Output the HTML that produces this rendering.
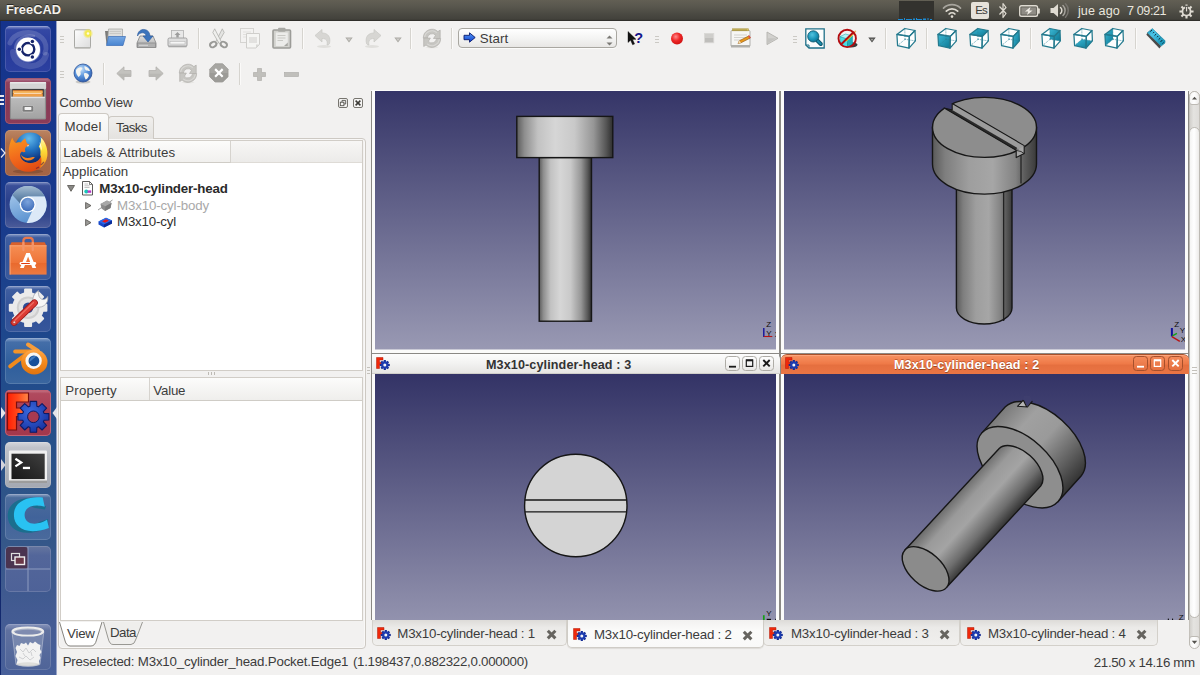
<!DOCTYPE html>
<html><head><meta charset="utf-8"><title>FreeCAD</title>
<style>
*{box-sizing:border-box;margin:0;padding:0}
html,body{width:1200px;height:675px;overflow:hidden;background:#f2f1f0;font-family:"Liberation Sans","DejaVu Sans",sans-serif;font-size:13px;color:#3c3c3c}
.abs{position:absolute}
svg{position:absolute;overflow:visible}
#panel{position:absolute;left:0;top:0;width:1200px;height:21px;background:linear-gradient(#625f54,#59574e 30%,#4b4a43 65%,#42413b 92%,#2f2e2a 97%);}
#panel .title{position:absolute;left:5px;top:2px;color:#f3efe6;font-weight:bold;font-size:13px;letter-spacing:0.1px}
#launcher{position:absolute;left:0;top:21px;width:57px;height:654px;background:linear-gradient(#15338c,#183a8c 30%,#1f4a8c 52%,#2a5288 68%,#355789 80%,#435b92 90%,#48609a);border-right:1px solid #97a3c6;border-left:1px solid #13296e}
.tile{position:absolute;left:4px;width:46px;height:46px;border-radius:5px;overflow:hidden;box-shadow:0 0 0 1px rgba(255,255,255,.14) inset}
.tile svg{left:0;top:0}
#win{position:absolute;left:57px;top:21px;width:1143px;height:654px;background:#f2f1f0}
.t{position:absolute;white-space:nowrap;line-height:1}
</style></head><body>
<div id="panel">
<div class="abs" style="left:898.500px;top:1px;width:35px;height:19px;background:#33322e"></div>
<svg style="left:898px;top:17px" width="36" height="4" viewBox="0 0 36 4"><g fill="#1c8cd6"><rect x="0" y="2" width="5" height="1"/><rect x="6" y="1" width="1" height="2"/><rect x="8" y="2" width="6" height="1"/><rect x="15" y="1.500" width="2" height="1.500"/><rect x="18" y="1" width="1" height="2"/><rect x="19" y="2" width="5" height="1"/><rect x="25" y="1.500" width="3" height="1.500"/><rect x="29.500" y="1" width="1" height="2"/><rect x="32" y="2" width="2" height="1"/></g></svg>
<!-- wifi -->
<svg style="left:942px;top:2px" width="20" height="17" viewBox="0 0 20 17">
<g fill="none" stroke="#dfdbd2" stroke-width="1.7" stroke-linecap="round">
<path d="M1.5 6.2 A12 12 0 0 1 18.5 6.2" stroke="#a8a59d"/>
<path d="M4.3 9.2 A8 8 0 0 1 15.7 9.2"/>
<path d="M7.1 12 A4.2 4.2 0 0 1 12.9 12"/></g>
<circle cx="10" cy="14.6" r="1.3" fill="#dfdbd2"/>
</svg>
<!-- Es -->
<div class="abs" style="left:971px;top:2px;width:18px;height:17px;background:#e6e2da;border-radius:2px"></div>
<!-- bluetooth -->
<svg style="left:998.300px;top:2px" width="10" height="17" viewBox="0 0 10 17">
<path d="M1.5 4.5 L8 11.5 L5 15.5 L5 1.5 L8 5.5 L1.5 12.5" fill="none" stroke="#dfdbd2" stroke-width="1.2" stroke-linejoin="round"/>
</svg>
<!-- battery -->
<svg style="left:1019px;top:4.500px" width="22" height="12" viewBox="0 0 24 13">
<rect x="0.8" y="0.8" width="19.4" height="11.4" rx="2" fill="none" stroke="#dfdbd2" stroke-width="1.5"/>
<rect x="2.5" y="2.5" width="16" height="8" fill="#8f8c85"/>
<rect x="20.5" y="3.5" width="2.2" height="6" rx="1" fill="#dfdbd2"/>
<path d="M12.5 2.2 L6.5 7 L10 7 L8.8 10.8 L14.8 6 L11.3 6 Z" fill="#f0ede6"/>
</svg>
<!-- volume -->
<svg style="left:1050px;top:3px" width="20" height="15" viewBox="0 0 20 15">
<path d="M0.5 5 H3.5 L8 1 V14 L3.5 10 H0.5 Z" fill="#dfdbd2"/>
<g fill="none" stroke-linecap="round" stroke-width="1.5">
<path d="M10.5 4.5 A4 4 0 0 1 10.5 10.5" stroke="#dfdbd2"/>
<path d="M13 2.5 A7 7 0 0 1 13 12.5" stroke="#a5a29b"/>
<path d="M15.5 0.8 A9.5 9.5 0 0 1 15.5 14.2" stroke="#77746e"/>
</g></svg>
<!-- gear/power -->
<svg style="left:1178.500px;top:3.500px" width="15" height="15" viewBox="0 0 17 17">
<g stroke="#dfdbd2" stroke-width="2.4" stroke-linecap="butt">
<path d="M8.5 0.5V3.5 M8.5 13.5V16.5 M0.5 8.5H3.5 M13.5 8.5H16.5 M2.8 2.8L5 5 M12 12L14.2 14.2 M2.8 14.2L5 12 M12 5L14.2 2.8"/></g>
<circle cx="8.5" cy="8.5" r="4.6" fill="none" stroke="#dfdbd2" stroke-width="2"/>
<rect x="7" y="2" width="3" height="7" fill="#3f3e3a"/>
<rect x="7.8" y="3.2" width="1.5" height="5.3" fill="#dfdbd2"/>
</svg>
</div>
<span class="t" style="left:6px;top:4px;font-size:12.8px;letter-spacing:0.033px;color:#f4f2ec;font-weight:bold;text-shadow:0 -1px 0 #2a2925;">FreeCAD</span>
<span class="t" style="left:975.3px;top:5px;font-size:11.5px;letter-spacing:-1.011px;color:#3c3b37;">Es</span>
<span class="t" style="left:1078px;top:5px;font-size:12.6px;letter-spacing:0.067px;color:#e9e6de;">jue ago</span>
<span class="t" style="left:1127px;top:5px;font-size:12.6px;letter-spacing:-0.404px;color:#e9e6de;">7 09:21</span>
<div id="launcher">
<!-- 1 dash -->
<div class="tile" style="top:5px;background:linear-gradient(#8c9ad0,#3448a4 8%,#273a9b 55%,#2c40a0)"><svg width="46" height="46" viewBox="0 0 46 46">
<g fill="none" stroke="#fff" stroke-linecap="round"><path d="M5 17 C9 7 26 2 37 12 C41 16 42 22 40 27" stroke-width="5" opacity=".16"/><path d="M8 26 C8 36 20 43 32 39 C37 37 40 33 41 29" stroke-width="6" opacity=".14"/><path d="M10 22 C11 13 20 8 29 10" stroke-width="2.500" opacity=".2"/></g>
<circle cx="23.100" cy="23.900" r="12.600" fill="#aab4dc" opacity=".5"/>
<circle cx="23.100" cy="23.500" r="11.900" fill="#fff"/>
<circle cx="23.1" cy="23.2" r="6.200" fill="none" stroke="#16246a" stroke-width="2.400"/>
<circle cx="14.30" cy="23.20" r="2.700" fill="#fff"/><circle cx="27.37" cy="15.50" r="2.700" fill="#fff"/><circle cx="27.37" cy="30.90" r="2.700" fill="#fff"/><circle cx="14.30" cy="23.20" r="1.750" fill="#16246a"/><circle cx="27.37" cy="15.50" r="1.750" fill="#16246a"/><circle cx="27.37" cy="30.90" r="1.750" fill="#16246a"/>
</svg></div>
<!-- 2 files -->
<div class="tile" style="top:57px;background:linear-gradient(#bc8098,#90405c 10%,#883a56 60%,#8c3c58);box-shadow:0 0 0 1px #a05a72 inset"><svg width="46" height="46" viewBox="0 0 46 46">
<defs><linearGradient id="cab" x1="0" y1="0" x2="0" y2="1"><stop offset="0" stop-color="#bcbcbc"/><stop offset="1" stop-color="#a2a2a2"/></linearGradient></defs>
<rect x="4.900" y="4" width="36.200" height="37.400" rx="1.500" fill="#8e8e8e"/>
<rect x="4.900" y="4" width="36.200" height="7.200" rx="1.500" fill="#d4d4d4"/>
<rect x="4.900" y="4" width="36.200" height="1.500" rx=".7" fill="#e8e8e8"/>
<rect x="7.200" y="10.900" width="31.600" height="8" fill="#3c3c3c"/>
<rect x="7.900" y="12.200" width="29.700" height="6.600" fill="#e8822e"/>
<rect x="7.900" y="13.200" width="29.700" height="2" fill="#f5b860"/>
<rect x="9" y="15.300" width="27.500" height=".9" fill="#fff6e4"/>
<rect x="7.900" y="16.300" width="29.700" height="2.500" fill="#f0a048"/>
<rect x="6" y="18.800" width="33.900" height="21.800" rx=".8" fill="url(#cab)"/>
<rect x="6" y="18.800" width="33.900" height="1.300" fill="#e2e2e6"/>
<rect x="17.200" y="27.500" width="11.500" height="6.500" rx="1.500" fill="#7c7c7c" stroke="#c4c4c4" stroke-width=".7"/>
<rect x="19.500" y="29" width="6.900" height="3.100" rx=".8" fill="#f2f2f2"/>
</svg></div>
<svg style="left:-1px;top:73px" width="5" height="12"><rect x="0" y="1" width="4" height="2" fill="#e8e8f0"/><rect x="0" y="5" width="4" height="2" fill="#e8e8f0"/><rect x="0" y="9" width="4" height="2" fill="#e8e8f0"/></svg>
<!-- 3 firefox -->
<div class="tile" style="top:109px;background:linear-gradient(#bc8562,#a96a48 30%,#a46444)"><svg width="46" height="46" viewBox="0 0 46 46">
<defs><radialGradient id="ffb" cx=".45" cy=".2" r=".85"><stop offset="0" stop-color="#62baec"/><stop offset=".45" stop-color="#2272c0"/><stop offset=".8" stop-color="#123a84"/><stop offset="1" stop-color="#0c2660"/></radialGradient>
<linearGradient id="ffo" x1=".2" y1="0" x2=".6" y2="1"><stop offset="0" stop-color="#f7941e"/><stop offset=".5" stop-color="#f26a1c"/><stop offset="1" stop-color="#e04a12"/></linearGradient>
<linearGradient id="ffy" x1="0" y1="0" x2="0" y2="1"><stop offset="0" stop-color="#fff6c0"/><stop offset=".4" stop-color="#fde23a"/><stop offset="1" stop-color="#f7941e"/></linearGradient></defs>
<ellipse cx="23" cy="41.500" rx="15" ry="2" fill="#5c3420" opacity=".35"/>
<circle cx="25.400" cy="17.800" r="15.200" fill="url(#ffb)"/>
<path d="M7.300 7.500 C5 12 3.500 17 3.800 23 C4.500 34 13 41.800 23.500 41.800 C33 41.800 41 35 42.300 26 C43 20 41.500 13 37 8 C38.500 13 38 17 36.500 19 C37.500 25 35 30 31 32 C27 34 21 33.500 17.500 30 C14.500 27 14.500 23 17 21.500 C18 22.500 19.500 22.500 20.500 21.500 C19.500 19.500 20 17.500 21.500 16.500 C22.800 16.200 24 15.500 24.500 14.500 C23 14 22 13.500 21.500 12.500 C21 10.500 20.500 9.500 20.200 8.300 C18.500 9.500 17 11 16 12.500 C14 12 12 12.200 10.500 13 C9 11.500 7.800 9.500 7.300 7.500 Z" fill="url(#ffo)"/>
<path d="M16 24.500 C18 27.500 22 28.800 26.800 27.200 C28 26.800 29 26.800 29.800 27.300 C28.500 29.500 25.500 31 22 30.500 C19 30 16.500 27.500 16 24.500 Z" fill="#f58220"/>
<path d="M35.500 7 C41 12 43 20 42.300 26 C41.800 31 39 35 35 38 C37 33 36.800 28 35.300 25 C35.800 21 35.300 18.500 33.800 16.500 C35.800 13.500 36.500 10 35.500 7 Z" fill="url(#ffy)"/>
<path d="M34.500 12 C36.500 15 37 18 36.500 21 C35.500 18 35 15 34.500 12 Z" fill="#fff" opacity=".85"/>
<path d="M21.800 15.800 L24.200 14.800 L23 16.800 Z" fill="#fbe4c8"/>
<path d="M36 35 l3 -3 M31 38.500 l3 -1.500" stroke="#4a1a4a" stroke-width="1.200" opacity=".6"/>
</svg></div>
<svg style="left:0;top:126px" width="5" height="12"><path d="M0 1.5 L4 6 L0 10.5" fill="none" stroke="#e8e8f0" stroke-width="1.2"/></svg>
<!-- 4 chromium -->
<div class="tile" style="top:161px;background:linear-gradient(#7c8cc0,#3a4f98 8%,#2a408c 40%,#33488e 75%,#4c5c9a)"><svg width="46" height="46" viewBox="0 0 46 46">
<defs><linearGradient id="chl" x1="0" y1="0" x2=".4" y2="1"><stop offset="0" stop-color="#b4d2f0"/><stop offset="1" stop-color="#5a92d0"/></linearGradient>
<linearGradient id="cht" x1="0" y1="0" x2="0" y2="1"><stop offset="0" stop-color="#a4bcd2"/><stop offset=".5" stop-color="#6c8eb0"/><stop offset="1" stop-color="#3e648c"/></linearGradient>
<radialGradient id="chc" cx=".5" cy=".3" r=".8"><stop offset="0" stop-color="#7ca4dc"/><stop offset="1" stop-color="#3464b4"/></radialGradient></defs>
<circle cx="23.100" cy="22.500" r="18.500" fill="url(#chl)"/>
<path d="M7.300 12.900 A18.500 18.500 0 0 1 39.700 14.400 L22.700 14.400 L17 23.500 Z" fill="url(#cht)"/>
<path d="M39.700 14.400 A18.500 18.500 0 0 1 21.600 40.900 L27 29.500 L22.700 14.400 Z" fill="#dce9f7"/>
<circle cx="22.700" cy="22.500" r="8" fill="#fff"/><circle cx="22.700" cy="22.500" r="6.700" fill="url(#chc)"/>
</svg></div>
<!-- 5 software center -->
<div class="tile" style="top:213px;background:linear-gradient(#8a9cc8,#3f5ea0 8%,#33549a 50%,#3a5a9c)"><svg width="46" height="46" viewBox="0 0 46 46">
<defs><linearGradient id="bag" x1="0" y1="0" x2="0" y2="1"><stop offset="0" stop-color="#f68e54"/><stop offset=".6" stop-color="#ee7438"/><stop offset=".62" stop-color="#e96a2e"/><stop offset="1" stop-color="#ec7a42"/></linearGradient></defs>
<path d="M6.500 8.200 H39.700 L41.600 12 H4.600 Z" fill="#d8602c"/>
<path d="M18.400 14 V6.500 A3 3 0 0 1 21.400 3.800 H24.800 A3 3 0 0 1 27.800 6.500 V14" fill="none" stroke="#e8764a" stroke-width="2.300"/>
<rect x="4.600" y="11.300" width="37" height="29.300" fill="url(#bag)"/>
<rect x="4.600" y="11.300" width="1" height="29.300" fill="#fbb088" opacity=".8"/>
<rect x="4.600" y="11.300" width="37" height="1" fill="#fbb088" opacity=".7"/>
<path d="M18.400 16 V9 M27.800 16 V9" stroke="#f49468" stroke-width="2.300" stroke-linecap="round"/>
<path d="M15 34 L21.300 19 H24.900 L31.200 34 H27.400 L23.100 22.500 L18.800 34 Z" fill="#fff"/>
<rect x="14.600" y="28.100" width="16.600" height="2.800" rx="1.400" fill="#fff"/>
<rect x="16" y="29.100" width="9" height=".9" rx=".4" fill="#e03c10"/>
</svg></div>
<!-- 6 settings -->
<div class="tile" style="top:265px;background:linear-gradient(#8a9cc8,#3f5ea0 8%,#2f5098 50%,#36569a)"><svg width="46" height="46" viewBox="0 0 46 46">
<g transform="translate(23.100 21.700)"><g fill="#ebebeb">
<rect x="-4" y="-19.300" width="8" height="38.600" rx="1"/><rect x="-4" y="-19.300" width="8" height="38.600" rx="1" transform="rotate(45)"/><rect x="-4" y="-19.300" width="8" height="38.600" rx="1" transform="rotate(90)"/><rect x="-4" y="-19.300" width="8" height="38.600" rx="1" transform="rotate(135)"/>
<circle r="15.800"/></g>
<circle r="11.300" fill="#cfcfcf"/><circle r="9.300" fill="#e2e2e2"/><circle r="5.200" fill="#2c4c96"/></g>
<path d="M28 17 C27 13 28.500 7.500 33.500 4.500 C33 7 33.500 10.500 35.500 12.500 C38 14.500 41 13.500 42.700 10.500 C43.500 15 41 19.500 36.500 20.800 C34 21.500 32.500 21 31.500 21.500 Z" fill="#f6f6f6" stroke="#a4a8b0" stroke-width=".8"/>
<path d="M9 36.500 L29.500 16.800" stroke="#9c1c1c" stroke-width="6.800" stroke-linecap="round"/>
<path d="M9 36.500 L29.500 16.800" stroke="#dc3c34" stroke-width="5.200" stroke-linecap="round"/>
<path d="M9.500 34.800 L28.500 16.500" stroke="#ee6c60" stroke-width="1.300" stroke-linecap="round"/>
<circle cx="9.300" cy="36.300" r="1.300" fill="#f4d4d0" stroke="#9c1c1c" stroke-width=".5"/>
</svg></div>
<!-- 7 blender -->
<div class="tile" style="top:317px;background:linear-gradient(#8aa4cc,#446ea8 9%,#2f5e9c 55%,#3a669f)"><svg width="46" height="46" viewBox="0 0 46 46">
<defs><linearGradient id="blo" x1="0" y1="0" x2="0" y2="1"><stop offset="0" stop-color="#ffa848"/><stop offset=".5" stop-color="#f48a1c"/><stop offset="1" stop-color="#e2740e"/></linearGradient></defs>
<g stroke="url(#blo)" stroke-width="4" stroke-linecap="round" fill="none"><path d="M5.200 28.300 L22 15.500" stroke="#f08a1c"/><path d="M10.200 13.500 H28" stroke="#f59428"/><path d="M23 6.500 L33 13" stroke="#f79c38"/></g>
<ellipse cx="29.300" cy="24" rx="13.200" ry="12.500" fill="url(#blo)"/>
<circle cx="28.600" cy="22.800" r="8.200" fill="#f6f6f4"/>
<circle cx="28.900" cy="22.900" r="5.400" fill="#16509a"/>
<path d="M24.500 24 A5.400 5.400 0 0 1 31.500 18.300 Z" fill="#4c86c8" opacity=".8"/>
</svg></div>
<!-- 8 freecad -->
<div class="tile" style="top:369px;background:linear-gradient(#c87888,#b04a5e 8%,#a83a50 60%,#a4384c);box-shadow:0 0 0 1px #c06274 inset"><svg width="46" height="46" viewBox="0 0 46 46">
<defs><linearGradient id="fcr" x1="0" y1="0" x2="1" y2="0"><stop offset="0" stop-color="#ff1e04"/><stop offset=".5" stop-color="#ff4a1c"/><stop offset="1" stop-color="#ff8848"/></linearGradient>
<radialGradient id="fcg" cx=".4" cy=".35" r=".7"><stop offset="0" stop-color="#3a6ae0"/><stop offset="1" stop-color="#1632a0"/></radialGradient></defs>
<path d="M2.500 3 H23.500 V12 H11.500 V18 H19.500 V26.500 H11.500 V40 H2.500 Z" fill="url(#fcr)" stroke="#7a0c0c" stroke-width="1.200"/>
<path d="M24.94 16.15 L25.20 11.33 L31.60 11.33 L31.86 16.15 L33.48 16.82 L37.07 13.59 L41.61 18.13 L38.38 21.72 L39.05 23.34 L43.87 23.60 L43.87 30.00 L39.05 30.26 L38.38 31.88 L41.61 35.47 L37.07 40.01 L33.48 36.78 L31.86 37.45 L31.60 42.27 L25.20 42.27 L24.94 37.45 L23.32 36.78 L19.73 40.01 L15.19 35.47 L18.42 31.88 L17.75 30.26 L12.93 30.00 L12.93 23.60 L17.75 23.34 L18.42 21.72 L15.19 18.13 L19.73 13.59 L23.32 16.82 Z" fill="url(#fcg)" stroke="#0c1a64" stroke-width="1.100" stroke-linejoin="round"/>
<circle cx="28.400" cy="26.800" r="5.800" fill="#a83a50" stroke="#0c1a64" stroke-width="1"/>
</svg></div>
<svg style="left:0;top:385px" width="5" height="14"><path d="M0 1 L4.500 7 L0 13 Z" fill="#e4e4ea"/></svg>
<svg style="left:51px;top:385px" width="5" height="14"><path d="M5 1 L.5 7 L5 13 Z" fill="#e4e4ea"/></svg>
<!-- 9 terminal -->
<div class="tile" style="top:421px;background:linear-gradient(#d4d6dc,#c0c3ca 12%,#acb0b8 70%,#a4a8b2)"><svg width="46" height="46" viewBox="0 0 46 46">
<defs><linearGradient id="scr" x1="1" y1="0" x2="0" y2="1"><stop offset="0" stop-color="#404040"/><stop offset=".5" stop-color="#2a2a2a"/><stop offset="1" stop-color="#181818"/></linearGradient></defs>
<rect x="3.900" y="8.600" width="38.100" height="32.400" rx="1.200" fill="#f0f0f0"/>
<rect x="3.900" y="38.500" width="38.100" height="2.500" fill="#9c9c9c"/>
<rect x="6.500" y="11.700" width="33.200" height="25.400" fill="url(#scr)"/>
<path d="M10.400 16.700 L16.200 20.600 L10.400 24.400" fill="none" stroke="#fff" stroke-width="2.300"/>
<rect x="17.900" y="24.800" width="7.100" height="2.300" fill="#fff"/>
</svg></div>
<svg style="left:0;top:437px" width="5" height="14"><path d="M0 1 L4.500 7 L0 13 Z" fill="#d4d4dc"/></svg>
<!-- 10 cura C -->
<div class="tile" style="top:473px;background:linear-gradient(#8fa2c4,#4c6c9c 8%,#41639a 50%,#4a6a9c)"><svg width="46" height="46" viewBox="0 0 46 46">
<path d="M31.500 4 C19 2.500 2.700 7 2.700 21.500 C2.700 35 16 43.500 37.500 36 L35.500 27.500 C25.500 33.500 13.500 31.500 13.500 21.500 C13.500 12.500 23.500 10.500 33.500 13.500 Z" fill="#1b6e8e"/>
<path d="M26 12.500 L41 12 L40 15.500 L30 14 Z M34 28 L43 25 L43.500 31 L36 31 Z" fill="#1b6e8e"/>
<path d="M37.700 3.500 C25 2 8.900 6 8.900 21 C8.900 34 22 42 43.900 33.900 L42 25.800 C32 32 19.600 31 19.600 21 C19.600 12 30 10 39.700 12.700 Z" fill="#29c2f2"/>
</svg></div>
<!-- 11 workspaces -->
<div class="tile" style="top:525px;background:linear-gradient(#66769f,#53669a 20%,#4e6298)"><svg width="46" height="46" viewBox="0 0 46 46">
<rect x="1" y="1" width="22" height="22" rx="3" fill="#4a3450"/>
<rect x="22.500" y="1" width="1" height="44" fill="#8e9bc0"/><rect x="1" y="22.500" width="44" height="1" fill="#8e9bc0"/>
<rect x="6.500" y="7.500" width="8" height="7" fill="#4a3450" stroke="#ddd" stroke-width="1.200"/>
<rect x="10" y="11" width="9.500" height="7.500" fill="#6a3848" stroke="#eee" stroke-width="1.400"/>
</svg></div>
<!-- trash -->
<div class="tile" style="top:603px;background:linear-gradient(#8794bc,#60719f 14%,#566a9c 60%,#4f6498)"><svg width="46" height="46" viewBox="0 0 46 46">
<path d="M7 8 L11 40.500 Q23 44.500 35 40.500 L38.800 8 Z" fill="#aab4cc" opacity=".35"/>
<path d="M7 8 L11 40.500 Q23 44.500 35 40.500 L38.800 8" fill="none" stroke="#c8cede" stroke-width=".8" opacity=".7"/>
<path d="M10.500 24 L12 21 L14.500 22 L16 19 L19 20 L21 18.500 L23 21.500 L25 18 L28 19.500 L30 17.500 L33 20 L35.500 21 L35 25 L36.500 28 L34.500 31 L35.500 34 L34 37 L34.500 40 Q23 43.500 11.500 40 L12.500 36 L10.500 32 L12 28 Z" fill="#f2f2f2"/>
<path d="M15 25 l3 3 l3 -4 l3 5 l4 -4 l3 3 M14 33 l4 2 l3 -3 l4 4 l4 -3 M18 29 l2 3 M26 28 l1 4" stroke="#cfd0d2" stroke-width="1" fill="none"/>
<ellipse cx="22.800" cy="40.300" rx="11.800" ry="2" fill="#d8d8d4" opacity=".8"/>
<ellipse cx="22.800" cy="7.500" rx="15.300" ry="4" fill="#a8b0c4" stroke="#ececec" stroke-width="2.200"/>
<ellipse cx="22.800" cy="8.200" rx="13" ry="2.400" fill="#7f8bb0"/>
</svg></div>
</div>
<div id="tb">
<svg style="left:60px;top:36px" width="5" height="8" viewBox="0 0 5 8"><g fill="#cbc9c4"><rect x="0" y="0" width="4" height="1"/><rect x="0" y="3" width="4" height="1"/><rect x="0" y="6" width="4" height="1"/></g></svg>
<svg style="left:60px;top:71px" width="5" height="8" viewBox="0 0 5 8"><g fill="#cbc9c4"><rect x="0" y="0" width="4" height="1"/><rect x="0" y="3" width="4" height="1"/><rect x="0" y="6" width="4" height="1"/></g></svg>
<svg style="left:74px;top:29px" width="18" height="20" viewBox="0 0 18 20"><defs><linearGradient id="pg" x1="0" y1="0" x2="1" y2="1"><stop offset="0" stop-color="#fdfdfd"/><stop offset="1" stop-color="#dcdcdc"/></linearGradient>
<radialGradient id="sun"><stop offset="0" stop-color="#fffbd0"/><stop offset=".45" stop-color="#f6ec50"/><stop offset="1" stop-color="#f0e040" stop-opacity="0"/></radialGradient></defs>
<rect x="0.5" y="0.800" width="16" height="18" rx="1" fill="url(#pg)" stroke="#a9a9a5"/>
<rect x="0.5" y="18" width="16" height="1.500" fill="#b4b4b0"/>
<circle cx="14" cy="4.500" r="5.200" fill="url(#sun)"/><circle cx="14" cy="4.500" r="3" fill="#f3ea50"/><circle cx="14" cy="4.500" r="1.300" fill="#fffde0"/></svg>
<svg style="left:104px;top:28px" width="22" height="19" viewBox="0 0 22 19"><defs><linearGradient id="fo" x1="0" y1="0" x2="0" y2="1"><stop offset="0" stop-color="#76a8e4"/><stop offset="1" stop-color="#4884d0"/></linearGradient></defs>
<path d="M1 3 L2.500 16.500 H17 V3 Z" fill="#7c7c7a"/>
<path d="M4.500 1 H18.500 V14 H3.500 Z" fill="#dededc" stroke="#a0a09c" stroke-width=".7"/>
<path d="M5.500 3.500 H17 M5.500 5.500 H17" stroke="#c4c4c0" stroke-width=".8"/>
<path d="M4.500 8.500 H21.500 L19 17.500 H2.500 Z" fill="url(#fo)" stroke="#3a6cb4" stroke-width=".7"/></svg>
<svg style="left:136px;top:28px" width="21" height="21" viewBox="0 0 21 21"><defs><linearGradient id="hd" x1="0" y1="0" x2="0" y2="1"><stop offset="0" stop-color="#e0e0e0"/><stop offset="1" stop-color="#a8a8a8"/></linearGradient></defs>
<path d="M4 8 H17 L20 15 V19.500 H1 V15 Z" fill="url(#hd)" stroke="#8c8c8c" stroke-width=".9"/>
<rect x="1.500" y="15" width="18" height="4.500" fill="#b0b0b0" stroke="#8c8c8c" stroke-width=".8"/>
<path d="M3 17.300 H12" stroke="#d8d8d8" stroke-width="1"/>
<path d="M1.500 8 C1.500 3.500 5 1 8.500 1.500 C12 2 13.800 4.500 14 8 L17 8 L12 14 L7 8 L10 8 C9.800 6 8.500 4.800 6.500 4.800 C4.500 4.800 2.500 6 1.500 8 Z" fill="#3c74bc" stroke="#2c5a9c" stroke-width=".6"/></svg>
<svg style="left:167px;top:30px" width="21" height="18" viewBox="0 0 21 18"><rect x="4.500" y="0.500" width="12" height="8" fill="#e8e8e8" stroke="#b0b0b0" stroke-width=".8"/>
<path d="M10.500 2 L13.500 5 H11.700 V7.500 H9.300 V5 H7.500 Z" fill="#9c9c9c"/>
<rect x="1" y="8" width="19" height="8.500" rx="1.500" fill="#dedede" stroke="#9a9a9a" stroke-width=".9"/>
<rect x="3" y="11.500" width="15" height="2.500" fill="#f6f6f6" stroke="#b0b0b0" stroke-width=".5"/>
<rect x="1.500" y="15.500" width="18" height="1.800" fill="#a8a8a8"/></svg>
<div class="abs" style="left:198px;top:28px;width:1px;height:21px;background:#d6d4cf"></div><div class="abs" style="left:199px;top:28px;width:1px;height:21px;background:#fbfaf9"></div>
<svg style="left:209px;top:28px" width="19" height="21" viewBox="0 0 19 21"><path d="M6.300 14.500 L13.300 0.800 L15.200 4.500 L8.800 15.500 Z" fill="#e4e4e2" stroke="#a8a8a4" stroke-width=".7"/>
<path d="M12.700 14.500 L5.700 0.800 L3.800 4.500 L10.200 15.500 Z" fill="#efefed" stroke="#a8a8a4" stroke-width=".7"/>
<g fill="none" stroke="#9a9a97" stroke-width="1.900"><ellipse cx="4.200" cy="16.500" rx="3.300" ry="2.500" transform="rotate(-30 4.200 16.500)"/><ellipse cx="14.800" cy="16.500" rx="3.300" ry="2.500" transform="rotate(30 14.800 16.500)"/></g></svg>
<svg style="left:240px;top:28px" width="21" height="21" viewBox="0 0 21 21"><g opacity=".6"><rect x="0.500" y="0.500" width="13" height="14" fill="#f4f4f2" stroke="#c2c2be"/>
<path d="M3 4 H11 M3 6.500 H11 M3 9 H11" stroke="#d6d6d2"/>
<path d="M6.500 5.500 H19.500 V16.500 L16 20 H6.500 Z" fill="#f8f8f6" stroke="#b8b8b4"/>
<rect x="9" y="9" width="8" height="6" fill="#d8d8d4"/>
<path d="M16 20 V16.500 H19.500 Z" fill="#c8c8c4"/></g></svg>
<svg style="left:272px;top:27px" width="20" height="22" viewBox="0 0 20 22"><rect x="1" y="3" width="17.500" height="18" rx="1" fill="#d2d2ce" stroke="#9c9c98" stroke-width="1.600"/>
<rect x="3.800" y="5.500" width="12" height="13.500" fill="#ececea"/>
<path d="M5.500 8.500 H13.500 M5.500 11 H13.500 M5.500 13.500 H11" stroke="#c8c8c4"/>
<rect x="6" y="0.800" width="7.500" height="4" rx="1" fill="#a8a8a4"/>
<path d="M12 19 L15.800 19 L15.800 15.500 Z" fill="#a8a8a4"/></svg>
<div class="abs" style="left:302px;top:28px;width:1px;height:21px;background:#d6d4cf"></div><div class="abs" style="left:303px;top:28px;width:1px;height:21px;background:#fbfaf9"></div>
<svg style="left:314px;top:29px" width="19" height="19" viewBox="0 0 19 19"><ellipse cx="10" cy="17.500" rx="7" ry="1.500" fill="#e0dfdc"/>
<path d="M1 6.500 L8 0.500 V4 C14 4 17 8 15.500 14.500 C15 15.500 14 16 13 16 C14 11.500 12 9.500 8 9.500 V13 Z" fill="#d7d6d3" stroke="#c9c8c4" stroke-width=".7"/></svg>
<svg style="left:345px;top:37px" width="8" height="6" viewBox="0 0 8 6"><path d="M0.3 0.5 H7.7 L4 5.5 Z" fill="#a9a7a2"/><path d="M2 1.500 H6 L4 4 Z" fill="#cfcdc9"/></svg>
<svg style="left:363px;top:29px" width="19" height="19" viewBox="0 0 19 19"><ellipse cx="9" cy="17.500" rx="7" ry="1.500" fill="#e0dfdc"/>
<path d="M18 6.500 L11 0.500 V4 C5 4 2 8 3.500 14.500 C4 15.500 5 16 6 16 C5 11.500 7 9.500 11 9.500 V13 Z" fill="#d7d6d3" stroke="#c9c8c4" stroke-width=".7"/></svg>
<svg style="left:394px;top:37px" width="8" height="6" viewBox="0 0 8 6"><path d="M0.3 0.5 H7.7 L4 5.5 Z" fill="#a9a7a2"/><path d="M2 1.500 H6 L4 4 Z" fill="#cfcdc9"/></svg>
<div class="abs" style="left:410px;top:28px;width:1px;height:21px;background:#d6d4cf"></div><div class="abs" style="left:411px;top:28px;width:1px;height:21px;background:#fbfaf9"></div>
<svg style="left:422.5px;top:28.5px" width="18" height="19" viewBox="0 0 18 19"><ellipse cx="9" cy="18.300" rx="6.500" ry=".9" fill="#e6e5e2"/><path d="M0.300 9.100 A8.700 8.700 0 0 1 14.900 2.600 L17.200 1.100 L17.200 9.500 L10.500 9.500 L12.600 6.200 A4.800 4.800 0 0 0 4.300 9.100 Z" fill="#c7c6c2" stroke="#b1b0ac" stroke-width=".7" stroke-linejoin="round"/><path d="M1.600 8.300 A7.400 7.400 0 0 1 13.800 3.700" fill="none" stroke="#d9d8d5" stroke-width="1.100"/><g transform="rotate(180 8.950 9.300)"><path d="M0.300 9.100 A8.700 8.700 0 0 1 14.900 2.600 L17.200 1.100 L17.200 9.500 L10.500 9.500 L12.600 6.200 A4.800 4.800 0 0 0 4.300 9.100 Z" fill="#c7c6c2" stroke="#b1b0ac" stroke-width=".7" stroke-linejoin="round"/><path d="M1.600 8.300 A7.400 7.400 0 0 1 13.800 3.700" fill="none" stroke="#d9d8d5" stroke-width="1.100"/></g></svg>
<div class="abs" style="left:451px;top:28px;width:1px;height:21px;background:#d6d4cf"></div><div class="abs" style="left:452px;top:28px;width:1px;height:21px;background:#fbfaf9"></div>
<div class="abs" style="left:458px;top:28px;width:159px;height:20px;border:1px solid #a9a7a1;border-radius:4px;background:linear-gradient(#ffffff,#f4f4f3 50%,#e8e7e5);box-shadow:0 1px 0 #fbfbfa"></div>
<svg style="left:463px;top:32px" width="13" height="11" viewBox="0 0 13 11"><defs><linearGradient id="ar" x1="0" y1="0" x2="0" y2="1"><stop offset="0" stop-color="#5a9af4"/><stop offset="1" stop-color="#0a3fd0"/></linearGradient></defs>
<path d="M1 3.300 H6.500 V0.800 L12.200 5.500 L6.500 10.200 V7.700 H1 Z" fill="url(#ar)" stroke="#0a1a6c" stroke-width=".9" stroke-linejoin="round"/></svg>
<span class="t" style="left:479.7px;top:32px;font-size:13.3px;letter-spacing:0.101px;color:#3c3c3c;">Start</span>
<svg style="left:606px;top:35px" width="7" height="11" viewBox="0 0 7 11"><path d="M0.500 3.500 L3.500 0.500 L6.500 3.500 Z" fill="#7a7974"/><path d="M0.500 7.500 L3.500 10.500 L6.500 7.500 Z" fill="#7a7974"/></svg>
<svg style="left:627px;top:31px" width="16" height="15" viewBox="0 0 16 15"><path d="M1 0.500 L1 11.500 L3.600 9.200 L5.600 13.800 L7.600 12.900 L5.600 8.500 L9 8.300 Z" fill="#111" stroke="#111" stroke-width=".4"/>
<text x="7.300" y="11.500" font-family="Liberation Sans,sans-serif" font-weight="bold" font-size="14.500" fill="#16168c">?</text></svg>
<svg style="left:655px;top:36px" width="5" height="8" viewBox="0 0 5 8"><g fill="#cbc9c4"><rect x="0" y="0" width="4" height="1"/><rect x="0" y="3" width="4" height="1"/><rect x="0" y="6" width="4" height="1"/></g></svg>
<svg style="left:670px;top:32px" width="14" height="14" viewBox="0 0 14 14"><defs><radialGradient id="rec" cx=".4" cy=".35" r=".7"><stop offset="0" stop-color="#ff8c8c"/><stop offset=".5" stop-color="#ee2626"/><stop offset="1" stop-color="#cc1010"/></radialGradient></defs><circle cx="7" cy="6.500" r="6" fill="url(#rec)"/></svg>
<svg style="left:704px;top:33px" width="11" height="11" viewBox="0 0 11 11"><rect x="0.500" y="0.500" width="9.200" height="9.200" fill="#cfcecb" stroke="#dad9d6"/><rect x="1" y="5" width="8.200" height="4.200" fill="#bfbebb"/></svg>
<svg style="left:730px;top:28px" width="22" height="20" viewBox="0 0 22 20"><rect x="1" y="2.500" width="19" height="16" rx="1" fill="#f6f6f4" stroke="#a8a8a4" stroke-width=".9"/>
<rect x="1" y="17" width="19" height="2.500" fill="#b0b0ac"/>
<rect x="2.500" y="0.800" width="16" height="2" fill="#d8c46a" stroke="#a89440" stroke-width=".6"/>
<path d="M4 1 V3 M6 1 V3 M8 1 V3 M10 1 V3 M12 1 V3 M14 1 V3 M16 1 V3" stroke="#8a7830" stroke-width=".6"/>
<path d="M4 7 H17 M4 9.500 H17 M4 12 H12" stroke="#cacac6" stroke-width=".8"/>
<path d="M8 15.500 L9.300 12.800 L19 7.800 L20.300 10 L10.600 15 Z" fill="#e8981c" stroke="#8c5414" stroke-width=".6"/>
<path d="M8 15.500 L9.500 12.500 L11 15 Z" fill="#f4dcb0"/><path d="M18 8 L19.500 10.500 L20.800 9.800 L19.300 7.300 Z" fill="#e05050"/></svg>
<svg style="left:766px;top:31px" width="13" height="15" viewBox="0 0 13 15"><path d="M1 1 L12 7.300 L1 13.600 Z" fill="#d2d1ce" stroke="#b3b2ae" stroke-width=".9" stroke-linejoin="round"/><path d="M2 7.300 L10 7.300 L2 12 Z" fill="#c4c3c0"/></svg>
<svg style="left:793px;top:36px" width="5" height="8" viewBox="0 0 5 8"><g fill="#cbc9c4"><rect x="0" y="0" width="4" height="1"/><rect x="0" y="3" width="4" height="1"/><rect x="0" y="6" width="4" height="1"/></g></svg>
<svg style="left:805px;top:28px" width="20" height="21" viewBox="0 0 20 21"><defs><radialGradient id="zf" cx=".4" cy=".35" r=".7"><stop offset="0" stop-color="#52c4e0"/><stop offset=".6" stop-color="#1a94b8"/><stop offset="1" stop-color="#0e6c88"/></radialGradient></defs>
<path d="M0.800 0.800 H19.200 V20 H4 L0.800 17 Z" fill="#fbfdfd" stroke="#1f7088" stroke-width="1.300"/>
<path d="M0.800 17 H4 V20" fill="none" stroke="#1f7088" stroke-width="1"/>
<path d="M12.300 12.500 L15.800 16" stroke="#0e5a70" stroke-width="4" stroke-linecap="round"/><path d="M12.500 12.700 L15.700 15.900" stroke="#1d8eae" stroke-width="2" stroke-linecap="round"/>
<circle cx="8.300" cy="8.400" r="5.600" fill="url(#zf)" stroke="#0e5a70" stroke-width=".9"/></svg>
<svg style="left:837px;top:29px" width="21" height="19" viewBox="0 0 21 19"><ellipse cx="14" cy="15.800" rx="6.500" ry="2.600" fill="#1a1a1a" opacity=".85"/>
<path d="M3 7.500 L10.500 10 V18 L3.500 15.500 Z" fill="#4cdce4" stroke="#1a98a4" stroke-width=".5"/>
<path d="M10.500 10 L15.500 7 V15 L10.500 18 Z" fill="#1eb0bc" stroke="#1a98a4" stroke-width=".5"/>
<path d="M3 7.500 L8.500 5 L15.500 7 L10.500 10 Z" fill="#b4f2f4" stroke="#1a98a4" stroke-width=".5"/>
<path d="M9 12 L15.500 5.500" stroke="#f0e020" stroke-width="1.600"/><path d="M15.500 5.500 L17.800 3" stroke="#e8a020" stroke-width="1.600"/><path d="M17.800 3 L18.800 1.900" stroke="#f0b070" stroke-width="1.600"/>
<circle cx="10.200" cy="9.400" r="8.700" fill="none" stroke="#b40c10" stroke-width="1.900"/>
<path d="M4 15.500 L16.400 3.300" stroke="#b40c10" stroke-width="1.900"/></svg>
<svg style="left:868px;top:37px" width="8" height="6" viewBox="0 0 8 6"><path d="M0.300 0.500 H7.700 L4 5.500 Z" fill="#4a4a48"/><path d="M2.200 1.700 H5.800 L4 4 Z" fill="#a0a09c"/></svg>
<div class="abs" style="left:885px;top:28px;width:1px;height:21px;background:#d6d4cf"></div><div class="abs" style="left:886px;top:28px;width:1px;height:21px;background:#fbfaf9"></div>
<svg style="left:895.5px;top:28px" width="21" height="21" viewBox="0 0 21 21"><defs><linearGradient id="cg" x1="0" y1="0" x2="1" y2="1"><stop offset="0" stop-color="#3cb8d4"/><stop offset="1" stop-color="#0c7894"/></linearGradient></defs><polygon points="0.9,6.4 8.8,0.5 19.0,2.5 19.4,12.9 13.0,20.2 1.6,17.6" fill="#fdfefe"/><g stroke="#2a8296" stroke-width=".7" stroke-dasharray="1.2 1" fill="none"><path d="M9.0 11.3 L8.8 0.5 M9.0 11.3 L1.6 17.6 M9.0 11.3 L19.4 12.9"/></g><g stroke="#247a8e" stroke-width="1.250" fill="none" stroke-linejoin="round"><polygon points="0.9,6.4 13.3,8.4 13.0,20.2 1.6,17.6"/><polygon points="0.9,6.4 8.8,0.5 19.0,2.5 13.3,8.4"/><polygon points="13.3,8.4 19.0,2.5 19.4,12.9 13.0,20.2"/></g></svg>
<div class="abs" style="left:926px;top:28px;width:1px;height:21px;background:#d6d4cf"></div><div class="abs" style="left:927px;top:28px;width:1px;height:21px;background:#fbfaf9"></div>
<svg style="left:936.5px;top:28px" width="21" height="21" viewBox="0 0 21 21"><polygon points="0.9,6.4 8.8,0.5 19.0,2.5 19.4,12.9 13.0,20.2 1.6,17.6" fill="#fdfefe"/><polygon points="0.9,6.4 13.3,8.4 13.0,20.2 1.6,17.6" fill="url(#cg)"/><g stroke="#2a8296" stroke-width=".7" stroke-dasharray="1.2 1" fill="none"><path d="M9.0 11.3 L8.8 0.5 M9.0 11.3 L1.6 17.6 M9.0 11.3 L19.4 12.9"/></g><g stroke="#247a8e" stroke-width="1.250" fill="none" stroke-linejoin="round"><polygon points="0.9,6.4 13.3,8.4 13.0,20.2 1.6,17.6"/><polygon points="0.9,6.4 8.8,0.5 19.0,2.5 13.3,8.4"/><polygon points="13.3,8.4 19.0,2.5 19.4,12.9 13.0,20.2"/></g></svg>
<svg style="left:968.5px;top:28px" width="21" height="21" viewBox="0 0 21 21"><polygon points="0.9,6.4 8.8,0.5 19.0,2.5 19.4,12.9 13.0,20.2 1.6,17.6" fill="#fdfefe"/><polygon points="0.9,6.4 8.8,0.5 19.0,2.5 13.3,8.4" fill="url(#cg)"/><g stroke="#2a8296" stroke-width=".7" stroke-dasharray="1.2 1" fill="none"><path d="M9.0 11.3 L8.8 0.5 M9.0 11.3 L1.6 17.6 M9.0 11.3 L19.4 12.9"/></g><g stroke="#247a8e" stroke-width="1.250" fill="none" stroke-linejoin="round"><polygon points="0.9,6.4 13.3,8.4 13.0,20.2 1.6,17.6"/><polygon points="0.9,6.4 8.8,0.5 19.0,2.5 13.3,8.4"/><polygon points="13.3,8.4 19.0,2.5 19.4,12.9 13.0,20.2"/></g></svg>
<svg style="left:1000px;top:28px" width="21" height="21" viewBox="0 0 21 21"><polygon points="0.9,6.4 8.8,0.5 19.0,2.5 19.4,12.9 13.0,20.2 1.6,17.6" fill="#fdfefe"/><polygon points="13.3,8.4 19.0,2.5 19.4,12.9 13.0,20.2" fill="url(#cg)"/><g stroke="#2a8296" stroke-width=".7" stroke-dasharray="1.2 1" fill="none"><path d="M9.0 11.3 L8.8 0.5 M9.0 11.3 L1.6 17.6 M9.0 11.3 L19.4 12.9"/></g><g stroke="#247a8e" stroke-width="1.250" fill="none" stroke-linejoin="round"><polygon points="0.9,6.4 13.3,8.4 13.0,20.2 1.6,17.6"/><polygon points="0.9,6.4 8.8,0.5 19.0,2.5 13.3,8.4"/><polygon points="13.3,8.4 19.0,2.5 19.4,12.9 13.0,20.2"/></g></svg>
<div class="abs" style="left:1030px;top:28px;width:1px;height:21px;background:#d6d4cf"></div><div class="abs" style="left:1031px;top:28px;width:1px;height:21px;background:#fbfaf9"></div>
<svg style="left:1041px;top:28px" width="21" height="21" viewBox="0 0 21 21"><polygon points="0.9,6.4 8.8,0.5 19.0,2.5 19.4,12.9 13.0,20.2 1.6,17.6" fill="#fdfefe"/><polygon points="8.8,0.5 19.0,2.5 19.4,12.9 9.0,11.3" fill="url(#cg)"/><g stroke="#2a8296" stroke-width=".7" stroke-dasharray="1.2 1" fill="none"><path d="M9.0 11.3 L8.8 0.5 M9.0 11.3 L1.6 17.6 M9.0 11.3 L19.4 12.9"/></g><g stroke="#247a8e" stroke-width="1.250" fill="none" stroke-linejoin="round"><polygon points="0.9,6.4 13.3,8.4 13.0,20.2 1.6,17.6"/><polygon points="0.9,6.4 8.8,0.5 19.0,2.5 13.3,8.4"/><polygon points="13.3,8.4 19.0,2.5 19.4,12.9 13.0,20.2"/></g></svg>
<svg style="left:1072.5px;top:28px" width="21" height="21" viewBox="0 0 21 21"><polygon points="0.9,6.4 8.8,0.5 19.0,2.5 19.4,12.9 13.0,20.2 1.6,17.6" fill="#fdfefe"/><polygon points="1.6,17.6 13.0,20.2 19.4,12.9 9.0,11.3" fill="url(#cg)"/><g stroke="#2a8296" stroke-width=".7" stroke-dasharray="1.2 1" fill="none"><path d="M9.0 11.3 L8.8 0.5 M9.0 11.3 L1.6 17.6 M9.0 11.3 L19.4 12.9"/></g><g stroke="#247a8e" stroke-width="1.250" fill="none" stroke-linejoin="round"><polygon points="0.9,6.4 13.3,8.4 13.0,20.2 1.6,17.6"/><polygon points="0.9,6.4 8.8,0.5 19.0,2.5 13.3,8.4"/><polygon points="13.3,8.4 19.0,2.5 19.4,12.9 13.0,20.2"/></g></svg>
<svg style="left:1104px;top:28px" width="21" height="21" viewBox="0 0 21 21"><polygon points="0.9,6.4 8.8,0.5 19.0,2.5 19.4,12.9 13.0,20.2 1.6,17.6" fill="#fdfefe"/><polygon points="0.9,6.4 8.8,0.5 9.0,11.3 1.6,17.6" fill="url(#cg)"/><g stroke="#2a8296" stroke-width=".7" stroke-dasharray="1.2 1" fill="none"><path d="M9.0 11.3 L8.8 0.5 M9.0 11.3 L1.6 17.6 M9.0 11.3 L19.4 12.9"/></g><g stroke="#247a8e" stroke-width="1.250" fill="none" stroke-linejoin="round"><polygon points="0.9,6.4 13.3,8.4 13.0,20.2 1.6,17.6"/><polygon points="0.9,6.4 8.8,0.5 19.0,2.5 13.3,8.4"/><polygon points="13.3,8.4 19.0,2.5 19.4,12.9 13.0,20.2"/></g></svg>
<div class="abs" style="left:1135px;top:28px;width:1px;height:21px;background:#d6d4cf"></div><div class="abs" style="left:1136px;top:28px;width:1px;height:21px;background:#fbfaf9"></div>
<svg style="left:1146px;top:28px" width="21" height="21" viewBox="0 0 21 21"><defs><linearGradient id="rul" x1="0" y1="0" x2="1" y2="1"><stop offset="0" stop-color="#1a98bc"/><stop offset=".3" stop-color="#4cc4e8"/><stop offset="1" stop-color="#0c88a8"/></linearGradient></defs>
<path d="M0.400 6.800 L1.300 4.700 L15.200 18 L13.500 20.500 Z" fill="#4a4a4a"/>
<path d="M6.400 0.600 L18.900 12.600 Q19.600 14 18.500 15.500 L15.200 18 L1.300 4.700 Z" fill="url(#rul)" stroke="#157a96" stroke-width=".5"/>
<path d="M6 2 L4.300 3.600 M8.200 4 L7 5.200 M10.200 6 L8.500 7.600 M12.200 8 L11 9.200 M14.300 10 L12.600 11.600 M16.300 12 L14.500 14 M17.500 14.500 L16.500 15.500" stroke="#0a2c3c" stroke-width="1"/></svg>
<svg style="left:73px;top:63px" width="20" height="21" viewBox="0 0 20 21"><defs><radialGradient id="gl" cx=".4" cy=".3" r=".75"><stop offset="0" stop-color="#c4e0fa"/><stop offset=".5" stop-color="#5a94dc"/><stop offset="1" stop-color="#2a58a8"/></radialGradient></defs>
<ellipse cx="10" cy="19" rx="7.500" ry="1.600" fill="#c8c7c4"/>
<circle cx="10" cy="10" r="9" fill="url(#gl)" stroke="#2a4f94" stroke-width=".8"/>
<path d="M3 7 C5 4 8 3.500 9.500 5 C9 7 7 7.500 7.500 9.500 C8.500 11 7 13 5.500 14 C4 12 2.500 10 3 7 Z" fill="#f4f4f0"/>
<path d="M11.500 3 C14 3.500 16.500 5.500 17 8 C15.500 8.500 14.500 7 13 7.500 C12 6 11 5 11.500 3 Z" fill="#f4f4f0"/>
<path d="M11 10.500 C13 9.500 15.500 10.500 16 12.500 C15 15 13.500 16.500 12.500 16.500 C12 14.500 10.500 12.500 11 10.500 Z" fill="#f4f4f0"/></svg>
<div class="abs" style="left:103px;top:63px;width:1px;height:22px;background:#d6d4cf"></div><div class="abs" style="left:104px;top:63px;width:1px;height:22px;background:#fbfaf9"></div>
<svg style="left:116px;top:66px" width="16" height="16" viewBox="0 0 16 16"><path d="M0.800 7.500 L8 0.800 V4.500 H15 V10.500 H8 V14.200 Z" fill="#c3c2be" stroke="#b2b1ad" stroke-width=".8" stroke-linejoin="round"/><path d="M2 7.800 L15 7.800 V10.500 H8 V14 Z" fill="#b9b8b4"/></svg>
<svg style="left:147.5px;top:66px" width="16" height="16" viewBox="0 0 16 16"><path d="M15.200 7.500 L8 0.800 V4.500 H1 V10.500 H8 V14.200 Z" fill="#c3c2be" stroke="#b2b1ad" stroke-width=".8" stroke-linejoin="round"/><path d="M14 7.800 L1 7.800 V10.500 H8 V14 Z" fill="#b9b8b4"/></svg>
<svg style="left:178.5px;top:63.8px" width="18" height="19" viewBox="0 0 18 19"><ellipse cx="9" cy="18.300" rx="6.500" ry=".9" fill="#e6e5e2"/><path d="M0.300 9.100 A8.700 8.700 0 0 1 14.900 2.600 L17.200 1.100 L17.200 9.500 L10.500 9.500 L12.600 6.200 A4.800 4.800 0 0 0 4.300 9.100 Z" fill="#c7c6c2" stroke="#b1b0ac" stroke-width=".7" stroke-linejoin="round"/><path d="M1.600 8.300 A7.400 7.400 0 0 1 13.800 3.700" fill="none" stroke="#d9d8d5" stroke-width="1.100"/><g transform="rotate(180 8.950 9.300)"><path d="M0.300 9.100 A8.700 8.700 0 0 1 14.900 2.600 L17.200 1.100 L17.200 9.500 L10.500 9.500 L12.600 6.200 A4.800 4.800 0 0 0 4.300 9.100 Z" fill="#c7c6c2" stroke="#b1b0ac" stroke-width=".7" stroke-linejoin="round"/><path d="M1.600 8.300 A7.400 7.400 0 0 1 13.800 3.700" fill="none" stroke="#d9d8d5" stroke-width="1.100"/></g></svg>
<svg style="left:208.6px;top:63px" width="19.8" height="19.8" viewBox="0 0 21 21"><path d="M6.500 0.800 H14.500 L20.200 6.500 V14.500 L14.500 20.200 H6.500 L0.800 14.500 V6.500 Z" fill="#a7a6a2" stroke="#9a9995" stroke-width=".8"/><path d="M0.800 10.500 H20.200 V14.500 L14.500 20.200 H6.500 L0.800 14.500 Z" fill="#9c9b97"/><path d="M6.500 6.500 L14.500 14.500 M14.500 6.500 L6.500 14.500" stroke="#fff" stroke-width="2.300"/></svg>
<div class="abs" style="left:239px;top:63px;width:1px;height:22px;background:#d6d4cf"></div><div class="abs" style="left:240px;top:63px;width:1px;height:22px;background:#fbfaf9"></div>
<svg style="left:253px;top:68px" width="13" height="13" viewBox="0 0 13 13"><path d="M4.500 0.500 H8.500 V4.500 H12.500 V8.500 H8.500 V12.500 H4.500 V8.500 H0.500 V4.500 H4.500 Z" fill="#c0bfbb" stroke="#b0afab" stroke-width=".7"/></svg>
<svg style="left:284px;top:72px" width="15" height="5" viewBox="0 0 15 5"><rect x="0.500" y="0.500" width="14" height="4" fill="#c0bfbb" stroke="#b0afab" stroke-width=".7"/></svg>
</div>
<div id="combo">
<span class="t" style="left:59.3px;top:96px;font-size:13.3px;letter-spacing:-0.214px;color:#3c3c3c;">Combo View</span>
<svg style="left:338px;top:97.500px" width="10" height="10" viewBox="0 0 10 10"><rect x=".5" y=".5" width="9" height="9" rx="1.500" fill="#f6f5f4" stroke="#77756f"/><rect x="2.300" y="4.200" width="3.600" height="3.500" fill="none" stroke="#55534e" stroke-width=".9"/><path d="M4 4.200 V2.400 H7.700 V6 H6" fill="none" stroke="#55534e" stroke-width=".9"/></svg>
<svg style="left:353px;top:97.500px" width="10" height="10" viewBox="0 0 10 10"><rect x=".5" y=".5" width="9" height="9" rx="1.500" fill="#f6f5f4" stroke="#77756f"/><path d="M2.600 2.600 L7.400 7.400 M7.400 2.600 L2.600 7.400" stroke="#3c3b37" stroke-width="1.500"/></svg>
<div class="abs" style="left:58px;top:137.500px;width:308px;height:511.500px;border:1px solid #cdc9c3;border-radius:4px;background:#f2f1f0;box-shadow:inset 0 0 0 1px #f9f8f7"></div>
<div class="abs" style="left:108px;top:115.500px;width:46px;height:23px;border:1px solid #cdc9c3;border-bottom:none;border-radius:4px 4px 0 0;background:linear-gradient(#f0efed,#e4e2df)"></div>
<div class="abs" style="left:58px;top:112.500px;width:51px;height:27px;border:1px solid #cdc9c3;border-bottom:none;border-radius:4px 4px 0 0;background:linear-gradient(#fbfbfa,#f2f1f0)"></div>
<span class="t" style="left:64.4px;top:120px;font-size:13.3px;letter-spacing:0.196px;color:#3c3c3c;">Model</span>
<span class="t" style="left:116px;top:121px;font-size:13.3px;letter-spacing:-0.640px;color:#3c3c3c;">Tasks</span>
<div class="abs" style="left:59.500px;top:140px;width:303px;height:231px;border:1px solid #d1cdc7;background:#fff"></div>
<div class="abs" style="left:60.500px;top:141px;width:301px;height:22px;background:linear-gradient(#f7f6f5,#ecebe9);border-bottom:1px solid #dedbd6"></div>
<div class="abs" style="left:60.500px;top:141px;width:170.500px;height:22px;background:linear-gradient(#fcfcfb,#f1f0ee);border-right:1px solid #d6d3ce;border-bottom:1px solid #cfccc6"></div>
<span class="t" style="left:63.3px;top:146px;font-size:13.3px;letter-spacing:0.049px;color:#3c3c3c;">Labels &amp; Attributes</span>
<span class="t" style="left:62.7px;top:165px;font-size:13.3px;letter-spacing:0.049px;color:#3c3c3c;">Application</span>
<span class="t" style="left:99.3px;top:182px;font-size:13.3px;letter-spacing:-0.166px;color:#2a2a2a;font-weight:bold;">M3x10-cylinder-head</span>
<span class="t" style="left:117px;top:199px;font-size:13.3px;letter-spacing:-0.133px;color:#a9a9a9;">M3x10-cyl-body</span>
<span class="t" style="left:117px;top:215px;font-size:13.3px;letter-spacing:-0.177px;color:#2e2e2e;">M3x10-cyl</span>
<svg style="left:67px;top:185px" width="8" height="7" viewBox="0 0 8 7"><path d="M.5 .5 H7.500 L4 6.300 Z" fill="#8a8986" stroke="#55534e" stroke-width=".8"/></svg>
<svg style="left:85px;top:202px" width="7" height="8" viewBox="0 0 7 8"><path d="M.6 .5 V6.800 L6 3.600 Z" fill="#9a9996" stroke="#55534e" stroke-width=".8"/></svg>
<svg style="left:85px;top:218.5px" width="7" height="8" viewBox="0 0 7 8"><path d="M.6 .5 V6.800 L6 3.600 Z" fill="#9a9996" stroke="#55534e" stroke-width=".8"/></svg>
<svg style="left:81.500px;top:181px" width="11" height="15" viewBox="0 0 11 15"><path d="M.5 .5 H7.500 L10.500 3.500 V14 H.5 Z" fill="#fdfdfd" stroke="#4a4a48" stroke-width=".9"/><path d="M7.500 .5 V3.500 H10.500" fill="none" stroke="#4a4a48" stroke-width=".7"/><path d="M2.500 3 H6 M2.500 4.800 H7.500 M2.500 6.500 H7.500" stroke="#a8a8a8" stroke-width=".7"/><circle cx="4.300" cy="10.500" r="2" fill="#18c8b8"/><rect x="5.600" y="9.400" width="3.600" height="2.400" fill="#b838c8"/></svg>
<svg style="left:97.500px;top:198.500px" width="15" height="13" viewBox="0 0 15 13"><path d="M0 11 L14.500 1" stroke="#9a9a9a" stroke-width="1"/><path d="M2.500 5 L9 1.500 L13.500 4 L12.500 9 L7 12 L3.500 9.500 Z" fill="#8c8c8c"/><path d="M2.500 5 L9 1.500 L13.500 4 L7.500 7.200 Z" fill="#a8a8a8"/><path d="M7.500 7.200 L13.500 4 L12.500 9 L7 12 Z" fill="#7a7a7a"/></svg>
<svg style="left:97.500px;top:216.500px" width="15" height="11" viewBox="0 0 15 11"><path d="M.5 4.500 L8 .8 L14 3.500 V6.500 L6 10.500 L.5 7.500 Z" fill="#1848c8"/><path d="M.5 4.500 L8 .8 L14 3.500 L6 7.500 Z" fill="#2a68e8"/><path d="M4 4.300 L8 2.300 L11 3.700 L7 5.700 Z" fill="#e81818"/><path d="M6 7.500 L14 3.500 V6.500 L6 10.500 Z" fill="#0c2c98"/></svg>
<svg style="left:208px;top:371.500px" width="8" height="4"><g fill="#bdbab4"><rect x="0" y="0" width="1" height="3"/><rect x="3" y="0" width="1" height="3"/><rect x="6" y="0" width="1" height="3"/></g></svg>
<svg style="left:367px;top:367px" width="3" height="8"><g fill="#c4c1bb"><rect x="0" y="0" width="3" height="1"/><rect x="0" y="3" width="3" height="1"/><rect x="0" y="6" width="3" height="1"/></g></svg>
<div class="abs" style="left:59.500px;top:376.500px;width:303px;height:244px;border:1px solid #d1cdc7;background:#fff"></div>
<div class="abs" style="left:60.500px;top:377.500px;width:301px;height:23px;background:linear-gradient(#fcfcfb,#efeeec);border-bottom:1px solid #cfccc6"></div>
<div class="abs" style="left:148.500px;top:378px;width:1px;height:22px;background:#d6d3ce"></div>
<span class="t" style="left:65.3px;top:384px;font-size:13.3px;letter-spacing:0.154px;color:#3c3c3c;">Property</span>
<span class="t" style="left:153.3px;top:384px;font-size:13.3px;letter-spacing:-0.206px;color:#3c3c3c;">Value</span>
<svg style="left:58px;top:620px" width="100" height="30" viewBox="0 0 100 30">
<path d="M45.500 2 L50 18 Q51.500 24.500 55 24.500 H73 Q76.500 24.500 78 19 L84.500 2" fill="#efeeec" stroke="#8f8d88" stroke-width=".9"/>
<path d="M1.500 2 L6.500 19 Q8 26 12 26 H33 Q37 26 38.500 20 L44 2 Z" fill="#fff"/>
<path d="M1.500 2 L6.500 19 Q8 26 12 26 H33 Q37 26 38.500 20 L44 2" fill="none" stroke="#77756f" stroke-width=".9"/></svg>
<span class="t" style="left:67px;top:627px;font-size:13.3px;letter-spacing:-0.223px;color:#3c3c3c;">View</span>
<span class="t" style="left:110px;top:626px;font-size:13.3px;letter-spacing:-0.523px;color:#3c3c3c;">Data</span>
<span class="t" style="left:62.7px;top:655px;font-size:13.3px;letter-spacing:-0.191px;color:#3c3c3c;">Preselected: M3x10_cylinder_head.Pocket.Edge1</span>
<span class="t" style="left:352.9px;top:655px;font-size:13.3px;letter-spacing:-0.269px;color:#3c3c3c;">(1.198437,0.882322,0.000000)</span>
<span class="t" style="left:1093.8px;top:656px;font-size:13.3px;letter-spacing:-0.340px;color:#3c3c3c;">21.50 x 14.16 mm</span>
</div>
<div id="mdi">
<div class="abs" style="left:371px;top:90px;width:818px;height:531px;background:#fbfbfa"></div>
<div class="abs" style="left:371px;top:91px;width:1px;height:530px;background:#8b8985"></div>
<div class="abs" style="left:779px;top:91px;width:2px;height:530px;background:#8b8985"></div>
<div class="abs" style="left:1187.500px;top:91px;width:1px;height:530px;background:#8b8985"></div>
<div class="abs" style="left:371px;top:352.500px;width:817px;height:1px;background:#8b8985"></div>
<svg style="left:374.5px;top:91px;overflow:hidden" width="401.5" height="258.5" viewBox="0 0 401.5 258.5"><defs><linearGradient id="bg1" gradientUnits="userSpaceOnUse" x1="0" y1="-5.5" x2="0" y2="258.5"><stop offset="0" stop-color="#333366"/><stop offset="1" stop-color="#9999b3"/></linearGradient></defs><rect width="401.5" height="258.5" fill="url(#bg1)"/><defs><linearGradient id="cy1" x1="0" y1="0" x2="1" y2="0"><stop offset="0" stop-color="#5c5c5c"/><stop offset=".08" stop-color="#8e8e8e"/><stop offset=".22" stop-color="#c2c2c2"/><stop offset=".4" stop-color="#d6d6d6"/><stop offset=".6" stop-color="#c9c9c9"/><stop offset=".8" stop-color="#969696"/><stop offset=".93" stop-color="#565656"/><stop offset="1" stop-color="#2e2e2e"/></linearGradient></defs><rect x="164.20000000000005" y="66.5" width="52.299999999999955" height="163.7" fill="url(#cy1)" stroke="#161616" stroke-width="1.4"/><rect x="141.79999999999995" y="25.400000000000006" width="96.0" height="41.19999999999999" fill="url(#cy1)" stroke="#161616" stroke-width="1.4"/><g transform="translate(388.79999999999995 229)"><text x="2.500" y="7.400" font-family="Liberation Sans,sans-serif" font-size="8" fill="#0c0c0c">Z</text><text x="2.500" y="15.900" font-family="Liberation Sans,sans-serif" font-size="8" fill="#0c0c0c">Y</text><text x="11" y="16.700" font-family="Liberation Sans,sans-serif" font-size="8" fill="#0c0c0c">X</text><path d="M0 8 V17" stroke="#12129c" stroke-width="1.400"/><path d="M0 16.500 H8.500" stroke="#b81414" stroke-width="1.100"/></g></svg>
<svg style="left:784px;top:91px;overflow:hidden" width="401" height="258.5" viewBox="0 0 401 258.5"><defs><linearGradient id="bg4" gradientUnits="userSpaceOnUse" x1="0" y1="-5.5" x2="0" y2="258.5"><stop offset="0" stop-color="#333366"/><stop offset="1" stop-color="#9999b3"/></linearGradient></defs><rect width="401" height="258.5" fill="url(#bg4)"/><defs><linearGradient id="cy4" x1="0" y1="0" x2="1" y2="0"><stop offset="0" stop-color="#5a5a5a"/><stop offset=".12" stop-color="#7e7e7e"/><stop offset=".35" stop-color="#9e9e9e"/><stop offset=".58" stop-color="#a6a6a6"/><stop offset=".8" stop-color="#828282"/><stop offset=".88" stop-color="#5e5e5e"/><stop offset="1" stop-color="#3a3a3a"/></linearGradient></defs><path d="M172.40000000000003 73.10000000000001 V217 A27.8 16 0 0 0 228.00000000000006 217 V73.10000000000001 Z" fill="url(#cy4)" stroke="#161616" stroke-width="1.4"/><path d="M219.70000000000005 93.10000000000001 V230" stroke="#161616" stroke-width="1.100"/><path d="M148.5 36.400000000000006 V73.10000000000001 A52 30 0 0 0 252.5 73.10000000000001 V36.400000000000006 Z" fill="url(#cy4)" stroke="#161616" stroke-width="1.4"/><ellipse cx="200.5" cy="36.400000000000006" rx="52" ry="30" fill="#8d8d8d" stroke="#161616" stroke-width="1.4"/><path d="M159.5 17.4 L168.2 19.0 L168.2 12.2 L163.0 12.5 Z" fill="#3b3b6c"/><path d="M168.2 12.5 L240.2 54.6 L240.2 61.0 L168.2 18.9 Z" fill="#9c9c9c"/><path d="M168.2 18.9 L233.0 56.8 L232.2 59.4 L160.2 17.0 Z" fill="#2a2a2a"/><path d="M232.2 59.4 L232.2 66.6 L240.2 62.6 L240.2 55.0 L235.0 58.0 Z" fill="#a6a6a6"/><path d="M168.2 19.0 L168.2 12.5 L240.2 54.6 L240.2 62.6 L232.2 66.6 L232.2 59.4 L160.2 17.0 L168.2 19.0" fill="none" stroke="#161616" stroke-width="1.1" stroke-linejoin="round"/><path d="M232.2 59.4 L237.0 60.5 L240.2 62.6" fill="none" stroke="#161616" stroke-width=".8"/><path d="M237.0 64.5 V92.5" stroke="#161616" stroke-width="1.100"/><g transform="translate(387.9000000000001 229)"><text x="2.300" y="7.400" font-family="Liberation Sans,sans-serif" font-size="8" fill="#0c0c0c">Z</text><text x="7.900" y="13.400" font-family="Liberation Sans,sans-serif" font-size="8" fill="#0c0c0c">Y</text><text x="8.800" y="21.700" font-family="Liberation Sans,sans-serif" font-size="8" fill="#0c0c0c">X</text><path d="M0 8 V16.500" stroke="#12129c" stroke-width="2"/><path d="M0.500 15.800 L5 13.400" stroke="#14a014" stroke-width="1.500"/><path d="M0 16.600 L7.900 21.400" stroke="#b81414" stroke-width="1.400"/></g></svg>
<svg style="left:374.5px;top:374px;overflow:hidden" width="401.5" height="246" viewBox="0 0 401.5 246"><defs><linearGradient id="bg3" gradientUnits="userSpaceOnUse" x1="0" y1="0" x2="0" y2="264"><stop offset="0" stop-color="#333366"/><stop offset="1" stop-color="#9999b3"/></linearGradient></defs><rect width="401.5" height="246" fill="url(#bg3)"/><circle cx="200.79999999999995" cy="131.5" r="51.200" fill="#d4d4d4" stroke="#161616" stroke-width="1.4"/><path d="M149.89999999999998 126 H251.70000000000005 M150.10000000000002 137.8 H251.5" stroke="#161616" stroke-width="1.300"/><g transform="translate(388.79999999999995 234)"><text x="2.500" y="7.700" font-family="Liberation Sans,sans-serif" font-size="8" fill="#0c0c0c">Y</text><path d="M0 7.200 V12" stroke="#14a014" stroke-width="1.700"/><rect x="2.900" y="10.800" width="4.300" height="1.200" fill="#0c0c0c"/><rect x="11.400" y="10.800" width="1.100" height="1.200" fill="#0c0c0c"/></g></svg>
<svg style="left:784px;top:374px;overflow:hidden" width="401" height="246" viewBox="0 0 401 246"><defs><linearGradient id="bg2" gradientUnits="userSpaceOnUse" x1="0" y1="0" x2="0" y2="264"><stop offset="0" stop-color="#333366"/><stop offset="1" stop-color="#9999b3"/></linearGradient></defs><rect width="401" height="246" fill="url(#bg2)"/><defs><linearGradient id="sh2" gradientUnits="userSpaceOnUse" x1="120.8" y1="176.2" x2="162.4" y2="213.6"><stop offset="0" stop-color="#6a6a6a"/><stop offset=".25" stop-color="#9a9a9a"/><stop offset=".5" stop-color="#a4a4a4"/><stop offset=".8" stop-color="#6e6e6e"/><stop offset="1" stop-color="#3a3a3a"/></linearGradient>
<linearGradient id="hd2" gradientUnits="userSpaceOnUse" x1="221.1" y1="33.1" x2="297.3" y2="101.7"><stop offset="0" stop-color="#7a7a7a"/><stop offset=".25" stop-color="#a0a0a0"/><stop offset=".5" stop-color="#9a9a9a"/><stop offset=".8" stop-color="#5e5e5e"/><stop offset="1" stop-color="#343434"/></linearGradient></defs><path d="M197.9 58.9 L221.1 33.1 A51.3 29.3 42.0 0 1 297.3 101.7 L274.1 127.5 Z" fill="url(#hd2)" stroke="#161616" stroke-width="1.4"/><path d="M239.3 25.6 L243.0 33.0 L248.4 26.6 L246.0 22.0 L240.0 22.0 Z" fill="#3e3e6e"/><path d="M233.5 32.3 L239.3 26.2 L243.0 33.0 Z" fill="#b4b4b4"/><path d="M239.3 26.2 L233.5 32.3 L243.5 33.0 L248.4 27.0 M239.3 26.2 L242.5 32.5" fill="none" stroke="#161616" stroke-width="1.1" stroke-linejoin="round"/><ellipse cx="236.0" cy="93.2" rx="51.3" ry="29.3" transform="rotate(42.0 236.0 93.2)" fill="#8e8e8e" stroke="#161616" stroke-width="1.4" /><path d="M120.8 176.2 L215.2 74.5 A28.0 16.0 42.0 0 1 256.8 111.9 L162.4 213.6 Z" fill="url(#sh2)"/><path d="M120.8 176.2 L215.2 74.5 A28.0 16.0 42.0 0 1 256.8 111.9 L162.4 213.6" fill="none" stroke="#161616" stroke-width="1.4"/><ellipse cx="141.6" cy="194.9" rx="28.0" ry="16.0" transform="rotate(42.0 141.6 194.9)" fill="#8b8b8b" stroke="#161616" stroke-width="1.4" /><g transform="translate(383.79999999999995 234)"><text x="11" y="11.900" font-family="Liberation Sans,sans-serif" font-size="8" fill="#0c0c0c">Z</text><rect x="0" y="10.600" width="1.100" height="1.400" fill="#0c0c0c"/><rect x="4.200" y="10.600" width="1.100" height="1.400" fill="#0c0c0c"/></g></svg>
<div class="abs" style="left:371.500px;top:354px;width:408px;height:20px;border-radius:5px 5px 0 0;background:linear-gradient(#fdfdfd,#f3f3f2 45%,#e6e5e3);border-bottom:1px solid #cfcdc9"></div>
<div class="abs" style="left:780.500px;top:353.500px;width:408px;height:20.500px;border-radius:6px 6px 0 0;background:linear-gradient(#f79262,#ef7a48 45%,#e56f3f 55%,#ea7544);border-top:1px solid #a9512a;box-shadow:inset 0 1px 0 #fba57c"></div>
<svg style="left:375.5px;top:357.3px" width="14.0" height="13.0" viewBox="0 0 14 13"><path d="M.5 .5 H7 V3 H3.500 V5.200 H6 V7.700 H3.500 V11.500 H.5 Z" fill="#f0280a" stroke="#b01a08" stroke-width=".5"/><g transform="translate(8.800 8)"><g fill="#142c94"><rect x="-1.100" y="-5" width="2.200" height="10"/><rect x="-1.100" y="-5" width="2.200" height="10" transform="rotate(45)"/><rect x="-1.100" y="-5" width="2.200" height="10" transform="rotate(90)"/><rect x="-1.100" y="-5" width="2.200" height="10" transform="rotate(135)"/></g><circle r="3.700" fill="#1c3cb0"/><circle r="1.500" fill="#f4f4f6"/></g></svg>
<svg style="left:785px;top:357.3px" width="14.0" height="13.0" viewBox="0 0 14 13"><path d="M.5 .5 H7 V3 H3.500 V5.200 H6 V7.700 H3.500 V11.500 H.5 Z" fill="#f0280a" stroke="#b01a08" stroke-width=".5"/><g transform="translate(8.800 8)"><g fill="#142c94"><rect x="-1.100" y="-5" width="2.200" height="10"/><rect x="-1.100" y="-5" width="2.200" height="10" transform="rotate(45)"/><rect x="-1.100" y="-5" width="2.200" height="10" transform="rotate(90)"/><rect x="-1.100" y="-5" width="2.200" height="10" transform="rotate(135)"/></g><circle r="3.700" fill="#1c3cb0"/><circle r="1.500" fill="#f4f4f6"/></g></svg>
<span class="t" style="left:486px;top:359px;font-size:12.6px;letter-spacing:0.110px;color:#333;font-weight:bold;">M3x10-cylinder-head : 3</span>
<span class="t" style="left:894px;top:359px;font-size:12.6px;letter-spacing:0.110px;color:#fff;font-weight:bold;text-shadow:0 1px 0 #9c4a26,0 -1px 0 #c45e34;">M3x10-cylinder-head : 2</span>
<div class="abs" style="left:724.5px;top:356.3px;width:15px;height:15px;border-radius:3.500px;background:linear-gradient(#fefefe,#e9e8e6);border:1px solid #aeaca6"></div>
<svg style="left:724.5px;top:356.3px" width="15" height="15" viewBox="0 0 15 15"><rect x="4" y="9.800" width="7" height="1.800" fill="#1a1a1a"/></svg>
<div class="abs" style="left:741.5px;top:356.3px;width:15px;height:15px;border-radius:3.500px;background:linear-gradient(#fefefe,#e9e8e6);border:1px solid #aeaca6"></div>
<svg style="left:741.5px;top:356.3px" width="15" height="15" viewBox="0 0 15 15"><rect x="4.300" y="4" width="6.400" height="6.400" fill="none" stroke="#1a1a1a" stroke-width="1.200"/><rect x="4" y="3.500" width="7" height="1.800" fill="#1a1a1a"/></svg>
<div class="abs" style="left:759.3px;top:356.3px;width:15px;height:15px;border-radius:3.500px;background:linear-gradient(#fefefe,#e9e8e6);border:1px solid #aeaca6"></div>
<svg style="left:759.3px;top:356.3px" width="15" height="15" viewBox="0 0 15 15"><path d="M4.300 4 L10.700 10.400 M10.700 4 L4.300 10.400" stroke="#1a1a1a" stroke-width="1.900"/></svg>
<div class="abs" style="left:1132.5px;top:356.3px;width:15px;height:15px;border-radius:3.500px;background:linear-gradient(#f48a5a,#e56f3f);border:1px solid #a6502c"></div>
<svg style="left:1132.5px;top:356.3px" width="15" height="15" viewBox="0 0 15 15"><rect x="4" y="9.800" width="7" height="1.800" fill="#fff"/></svg>
<div class="abs" style="left:1150.4px;top:356.3px;width:15px;height:15px;border-radius:3.500px;background:linear-gradient(#f48a5a,#e56f3f);border:1px solid #a6502c"></div>
<svg style="left:1150.4px;top:356.3px" width="15" height="15" viewBox="0 0 15 15"><rect x="4.300" y="4" width="6.400" height="6.400" fill="none" stroke="#fff" stroke-width="1.200"/><rect x="4" y="3.500" width="7" height="1.800" fill="#fff"/></svg>
<div class="abs" style="left:1168px;top:356.3px;width:15px;height:15px;border-radius:3.500px;background:linear-gradient(#f48a5a,#e56f3f);border:1px solid #a6502c"></div>
<svg style="left:1168px;top:356.3px" width="15" height="15" viewBox="0 0 15 15"><path d="M4.300 4 L10.700 10.400 M10.700 4 L4.300 10.400" stroke="#fff" stroke-width="1.900"/></svg>
<div class="abs" style="left:371px;top:620px;width:818px;height:29px;background:#f2f1f0"></div>
<div class="abs" style="left:372px;top:620px;width:195px;height:25.500px;border:1px solid #d3d0ca;border-top:none;border-radius:0 0 5px 5px;background:linear-gradient(#dddbd8,#ebeae8 30%,#f0efed)"></div>
<div class="abs" style="left:763px;top:620px;width:197px;height:25.500px;border:1px solid #d3d0ca;border-top:none;border-radius:0 0 5px 5px;background:linear-gradient(#dddbd8,#ebeae8 30%,#f0efed)"></div>
<div class="abs" style="left:959.5px;top:620px;width:198.0px;height:25.500px;border:1px solid #d3d0ca;border-top:none;border-radius:0 0 5px 5px;background:linear-gradient(#dddbd8,#ebeae8 30%,#f0efed)"></div>
<div class="abs" style="left:566.5px;top:619.500px;width:197.0px;height:28.500px;border:1px solid #cfccc6;border-top:none;border-radius:0 0 5px 5px;background:linear-gradient(#f2f1f0,#fbfbfa 40%,#f9f9f8);box-shadow:0 1px 1px #dddbd7"></div>
<svg style="left:377.3px;top:626.5px" width="14.0" height="13.0" viewBox="0 0 14 13"><path d="M.5 .5 H7 V3 H3.500 V5.200 H6 V7.700 H3.500 V11.500 H.5 Z" fill="#f0280a" stroke="#b01a08" stroke-width=".5"/><g transform="translate(8.800 8)"><g fill="#142c94"><rect x="-1.100" y="-5" width="2.200" height="10"/><rect x="-1.100" y="-5" width="2.200" height="10" transform="rotate(45)"/><rect x="-1.100" y="-5" width="2.200" height="10" transform="rotate(90)"/><rect x="-1.100" y="-5" width="2.200" height="10" transform="rotate(135)"/></g><circle r="3.700" fill="#1c3cb0"/><circle r="1.500" fill="#f4f4f6"/></g></svg>
<span class="t" style="left:397.3px;top:627px;font-size:13.3px;letter-spacing:-0.215px;color:#3c3c3c;">M3x10-cylinder-head : 1</span>
<svg style="left:545.7px;top:628.5px" width="11" height="11" viewBox="0 0 11 11"><path d="M1.800 1.800 L9.400 9.400 M9.400 1.800 L1.800 9.400" stroke="#66645f" stroke-width="3"/></svg>
<svg style="left:573.3px;top:627.5px" width="14.0" height="13.0" viewBox="0 0 14 13"><path d="M.5 .5 H7 V3 H3.500 V5.200 H6 V7.700 H3.500 V11.500 H.5 Z" fill="#f0280a" stroke="#b01a08" stroke-width=".5"/><g transform="translate(8.800 8)"><g fill="#142c94"><rect x="-1.100" y="-5" width="2.200" height="10"/><rect x="-1.100" y="-5" width="2.200" height="10" transform="rotate(45)"/><rect x="-1.100" y="-5" width="2.200" height="10" transform="rotate(90)"/><rect x="-1.100" y="-5" width="2.200" height="10" transform="rotate(135)"/></g><circle r="3.700" fill="#1c3cb0"/><circle r="1.500" fill="#f4f4f6"/></g></svg>
<span class="t" style="left:594px;top:628px;font-size:13.3px;letter-spacing:-0.215px;color:#3c3c3c;">M3x10-cylinder-head : 2</span>
<svg style="left:741.7px;top:629.5px" width="11" height="11" viewBox="0 0 11 11"><path d="M1.800 1.800 L9.400 9.400 M9.400 1.800 L1.800 9.400" stroke="#66645f" stroke-width="3"/></svg>
<svg style="left:769px;top:626.5px" width="14.0" height="13.0" viewBox="0 0 14 13"><path d="M.5 .5 H7 V3 H3.500 V5.200 H6 V7.700 H3.500 V11.500 H.5 Z" fill="#f0280a" stroke="#b01a08" stroke-width=".5"/><g transform="translate(8.800 8)"><g fill="#142c94"><rect x="-1.100" y="-5" width="2.200" height="10"/><rect x="-1.100" y="-5" width="2.200" height="10" transform="rotate(45)"/><rect x="-1.100" y="-5" width="2.200" height="10" transform="rotate(90)"/><rect x="-1.100" y="-5" width="2.200" height="10" transform="rotate(135)"/></g><circle r="3.700" fill="#1c3cb0"/><circle r="1.500" fill="#f4f4f6"/></g></svg>
<span class="t" style="left:791px;top:627px;font-size:13.3px;letter-spacing:-0.215px;color:#3c3c3c;">M3x10-cylinder-head : 3</span>
<svg style="left:939.3px;top:628.5px" width="11" height="11" viewBox="0 0 11 11"><path d="M1.800 1.800 L9.400 9.400 M9.400 1.800 L1.800 9.400" stroke="#66645f" stroke-width="3"/></svg>
<svg style="left:967px;top:626.5px" width="14.0" height="13.0" viewBox="0 0 14 13"><path d="M.5 .5 H7 V3 H3.500 V5.200 H6 V7.700 H3.500 V11.500 H.5 Z" fill="#f0280a" stroke="#b01a08" stroke-width=".5"/><g transform="translate(8.800 8)"><g fill="#142c94"><rect x="-1.100" y="-5" width="2.200" height="10"/><rect x="-1.100" y="-5" width="2.200" height="10" transform="rotate(45)"/><rect x="-1.100" y="-5" width="2.200" height="10" transform="rotate(90)"/><rect x="-1.100" y="-5" width="2.200" height="10" transform="rotate(135)"/></g><circle r="3.700" fill="#1c3cb0"/><circle r="1.500" fill="#f4f4f6"/></g></svg>
<span class="t" style="left:988px;top:627px;font-size:13.3px;letter-spacing:-0.215px;color:#3c3c3c;">M3x10-cylinder-head : 4</span>
<svg style="left:1135.9px;top:628.5px" width="11" height="11" viewBox="0 0 11 11"><path d="M1.800 1.800 L9.400 9.400 M9.400 1.800 L1.800 9.400" stroke="#66645f" stroke-width="3"/></svg>
<div class="abs" style="left:1189px;top:91px;width:11px;height:557px;border-radius:5.500px;background:linear-gradient(90deg,#d2d0cc,#e4e3e0 40%,#dedcd9);border:1px solid #c4c1bb"></div>
<div class="abs" style="left:1189px;top:127px;width:11px;height:491px;border-radius:5.500px;background:linear-gradient(90deg,#f4f4f3,#ffffff 45%,#ecebe9);border:1px solid #bdbab4"></div>
<div class="abs" style="left:1189px;top:91px;width:11px;height:14px;border-radius:5.500px 5.500px 3px 3px;background:linear-gradient(90deg,#f4f4f3,#fff 45%,#ecebe9);border:1px solid #bdbab4"></div>
<div class="abs" style="left:1189px;top:636px;width:11px;height:12.500px;border-radius:3px 3px 5.500px 5.500px;background:linear-gradient(90deg,#f4f4f3,#fff 45%,#ecebe9);border:1px solid #bdbab4"></div>
<svg style="left:1191px;top:96px" width="7" height="5"><path d="M1 3.500 L3.500 .8 L6 3.500 Z" fill="#55534e"/></svg>
<svg style="left:1191px;top:640px" width="7" height="5"><path d="M.8 .8 L3.500 4 L6.200 .8 Z" fill="#55534e"/></svg>
<svg style="left:1192px;top:367px" width="5" height="9"><g fill="#c4c1bb"><rect x="0" y="0" width="5" height="1"/><rect x="0" y="3" width="5" height="1"/><rect x="0" y="6" width="5" height="1"/></g></svg>
</div>
</body></html>
